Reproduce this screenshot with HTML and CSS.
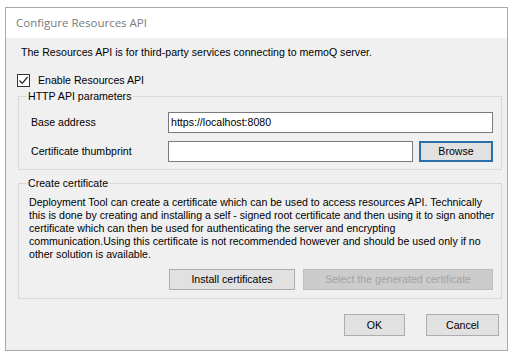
FILE: index.html
```html
<!DOCTYPE html>
<html lang="en">
<head>
  <meta charset="UTF-8">
  <title>Configure Resources API</title>
  <link rel="stylesheet" href="styles.css">
</head>
<body>
  <div class="dialog">
    <div class="titlebar">Configure Resources API</div>

    <div class="dialog-body">
      <p class="intro">The Resources API is for third-party services connecting to memoQ server.</p>

      <label class="check-row">
        <span class="checkbox">
          <svg width="11" height="11" viewBox="0 0 11 11"><path d="M1.5 5.5 L4.2 8.3 L9.6 2" fill="none" stroke="#1f1f1f" stroke-width="1.2"/></svg>
        </span>
        Enable Resources API
      </label>

      <!-- HTTP API parameters -->
      <fieldset class="group">
        <legend>HTTP API parameters</legend>
        <div class="group-inner params">
          <div class="field-row">
            <span class="field-label">Base address</span>
            <div class="textbox">https://localhost:8080</div>
          </div>
          <div class="field-row">
            <span class="field-label">Certificate thumbprint</span>
            <div class="textbox"></div>
            <button class="btn btn-focus browse">Browse</button>
          </div>
        </div>
      </fieldset>

      <!-- Create certificate -->
      <fieldset class="group group-cert">
        <legend>Create certificate</legend>
        <div class="group-inner cert">
          <p class="cert-text">Deployment Tool can create a certificate which can be used to access resources API. Technically<br>
            this is done by creating and installing a self - signed root certificate and then using it to sign another<br>
            certificate which can then be used for authenticating the server and encrypting<br>
            communication.Using this certificate is not recommended however and should be used only if no<br>
            other solution is available.</p>
          <div class="cert-buttons">
            <button class="btn install">Install certificates</button>
            <button class="btn select" disabled>Select the generated certificate</button>
          </div>
        </div>
      </fieldset>

      <div class="footer">
        <button class="btn ok">OK</button>
        <button class="btn cancel">Cancel</button>
      </div>
    </div>
  </div>
</body>
</html>
```

FILE: styles.css
```css
/* Page */
html, body {
    margin: 0;
    padding: 0;
    background: #fff;
}

body {
    font-family: "Liberation Sans", Arial, sans-serif;
    font-size: 10.6px;
    color: #000;
}

/* Window frame */
.dialog {
    box-sizing: border-box;
    width: 503px;
    height: 344px;
    margin: 7px 0 0 5px;
    border: 1px solid #a9a9a9;
    background: #f0f0f0;
    display: flex;
    flex-direction: column;
}

.titlebar {
    height: 30px;
    line-height: 30px;
    padding-left: 10px;
    background: #fff;
    color: #7a7a7a;
    font-family: "Open Sans", sans-serif;
    font-size: 11.5px;
}

.dialog-body {
    padding: 8px 0 0 0;
    line-height: 13px;
}

.intro {
    margin: 0 0 0 15px;
}

/* Checkbox */
.check-row {
    display: flex;
    align-items: center;
    gap: 8px;
    margin: 15px 0 0 11px;
    height: 13px;
}

.checkbox {
    box-sizing: border-box;
    width: 13px;
    height: 13px;
    border: 1px solid #333;
    background: #fff;
    display: flex;
    align-items: center;
    justify-content: center;
}

/* Group boxes */
.group {
    margin: 3px 5px 0 12px;
    padding: 0;
    border: 1px solid #d9d9d9;
    min-width: 0;
}

.group-cert {
    margin-top: 7px;
}

.group legend {
    margin-left: 8px;
    padding: 0 1px;
    line-height: 13px;
}

.params {
    padding: 9px 8px 7px 12px;
    display: flex;
    flex-direction: column;
    gap: 8px;
}

.field-row {
    display: flex;
    align-items: center;
    gap: 6px;
    height: 21px;
}

.field-label {
    width: 131px;
    flex-shrink: 0;
}

.textbox {
    box-sizing: border-box;
    flex: 1;
    height: 21px;
    line-height: 19px;
    padding-left: 2px;
    border: 1px solid #7a7a7a;
    background: #fff;
}

/* Buttons */
.btn {
    box-sizing: border-box;
    height: 21px;
    padding: 0;
    border: 1px solid #adadad;
    background: #e1e1e1;
    font: inherit;
    color: #000;
}

.btn-focus {
    border: 2px solid #2a6fa8;
}

.browse {
    width: 74px;
    flex-shrink: 0;
}

.cert {
    padding: 6px 8px 8px 10px;
}

.cert-text {
    margin: 0;
    white-space: nowrap;
}

.cert-buttons {
    display: flex;
    justify-content: flex-end;
    gap: 8px;
    margin-top: 8px;
}

.install {
    width: 126px;
}

.select {
    width: 190px;
    background: #cccccc;
    border-color: #bfbfbf;
    color: #a3a3a3;
}

.footer {
    display: flex;
    justify-content: flex-end;
    gap: 21px;
    margin: 15px 8px 0 0;
}

.footer .btn {
    height: 22px;
}

.ok {
    width: 61px;
}

.cancel {
    width: 73px;
}
```
